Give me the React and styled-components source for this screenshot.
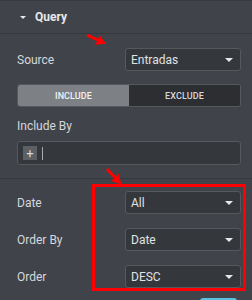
import React from "react";
import styled, { createGlobalStyle } from "styled-components";

const Global = createGlobalStyle`
  html, body {
    margin: 0;
    padding: 0;
    background: #404349;
    font-family: Roboto, "Liberation Sans", sans-serif;
  }
`;

const Panel = styled.div`
  position: relative;
  width: 252px;
  height: 300px;
  overflow: hidden;
  background: #404349;
  border-top: 1px solid #383b40;
  box-sizing: border-box;
`;

const Header = styled.div`
  display: flex;
  align-items: center;
  gap: 9px;
  height: 32px;
  padding-left: 20px;
  border-bottom: 1px solid #35383d;
  color: #e6e8ea;
  font-size: 12px;
  font-weight: 700;
`;

const Caret = styled.span`
  width: 0;
  height: 0;
  border-left: ${p => p.size || 3}px solid transparent;
  border-right: ${p => p.size || 3}px solid transparent;
  border-top: ${p => p.size || 3}px solid ${p => p.color || "#d5d8dc"};
`;

const Section = styled.div`
  display: flex;
  flex-direction: column;
  gap: ${p => p.gap || 13}px;
  padding: ${p => p.top || 14}px 11px 13px 17px;
  border-bottom: ${p => (p.divided ? "1px solid #35383d" : "none")};
`;

const Row = styled.div`
  display: flex;
  align-items: center;
  justify-content: space-between;
  height: 23px;
`;

const Label = styled.span`
  color: #d5d8dc;
  font-size: 12px;
`;

const Select = styled.div`
  display: flex;
  align-items: center;
  justify-content: space-between;
  box-sizing: border-box;
  width: 116px;
  height: 23px;
  padding: 0 7px 0 5px;
  background: #34383c;
  border: 1px solid #55585d;
  border-radius: 3px;
  color: #e0e2e4;
  font-size: 12px;
`;

const Toggle = styled.div`
  display: flex;
  height: 23px;
  border: 1px solid #55585d;
  border-radius: 3px;
  overflow: hidden;
  box-sizing: border-box;
`;

const ToggleButton = styled.div`
  flex: 1;
  display: flex;
  align-items: center;
  justify-content: center;
  background: ${p => (p.active ? "#7d8085" : "#2c2e32")};
  color: ${p => (p.active ? "#f2f3f4" : "#d5d8dc")};
  font-size: 9px;
  font-weight: 500;
  letter-spacing: 0.1px;
`;

const Field = styled.div`
  display: flex;
  flex-direction: column;
  gap: 8px;
  margin-top: -1px;
`;

const TagInput = styled.div`
  display: flex;
  align-items: center;
  gap: 5px;
  box-sizing: border-box;
  height: 24px;
  padding: 0 5px;
  background: #34383c;
  border: 1px solid #55585d;
  border-radius: 3px;
`;

const Plus = styled.span`
  display: flex;
  align-items: center;
  justify-content: center;
  width: 14px;
  height: 14px;
  background: #5c5f64;
  color: #d5d8dc;
  font-size: 13px;
  line-height: 1;
`;

const Cursor = styled.span`
  width: 1px;
  height: 13px;
  background: #a9abae;
`;

const Highlight = styled.div`
  position: absolute;
  left: 92px;
  top: 183px;
  width: 154px;
  height: 107px;
  box-sizing: border-box;
  border: 3px solid #ff0000;
  pointer-events: none;
`;

const Arrow = styled.svg`
  position: absolute;
  left: ${p => p.x}px;
  top: ${p => p.y}px;
  overflow: visible;
`;

const Button = styled.div`
  position: absolute;
  left: 200px;
  top: 297px;
  width: 37px;
  height: 10px;
  border-radius: 3px;
  background: #5bc0de;
`;

const SelectBox = ({ value }) => (
  <Select>
    <span>{value}</span>
    <Caret size={4} color="#e6e8ea" />
  </Select>
);

// arrow pointing right from the origin, rotated to its angle
const RedArrow = ({ x, y, angle, length }) => (
  <Arrow x={x} y={y} width="1" height="1">
    <g transform={`rotate(${angle})`}>
      <path
        d={`M0 -1.5 L${length - 9} -1.5 L${length - 10} -5.5 L${length} 0 L${length - 10} 5.5 L${length - 9} 1.5 L0 1.5 Z`}
        fill="#ff0000"
      />
    </g>
  </Arrow>
);

export default function App() {
  return (
    <>
      <Global />
      <Panel>
        <Header>
          <Caret size={3} color="#e6e8ea" />
          Query
        </Header>
        <Section divided>
          <Row>
            <Label>Source</Label>
            <SelectBox value="Entradas" />
          </Row>
          <Toggle>
            <ToggleButton active>INCLUDE</ToggleButton>
            <ToggleButton>EXCLUDE</ToggleButton>
          </Toggle>
          <Field>
            <Label>Include By</Label>
            <TagInput>
              <Plus>+</Plus>
              <Cursor />
            </TagInput>
          </Field>
        </Section>
        <Section gap={14} top={12}>
          <Row>
            <Label>Date</Label>
            <SelectBox value="All" />
          </Row>
          <Row>
            <Label>Order By</Label>
            <SelectBox value="Date" />
          </Row>
          <Row>
            <Label>Order</Label>
            <SelectBox value="DESC" />
          </Row>
        </Section>
        <Highlight />
        <RedArrow x={87} y={34} angle={25} length={21} />
        <RedArrow x={107} y={168} angle={47} length={21} />
        <Button />
      </Panel>
    </>
  );
}
